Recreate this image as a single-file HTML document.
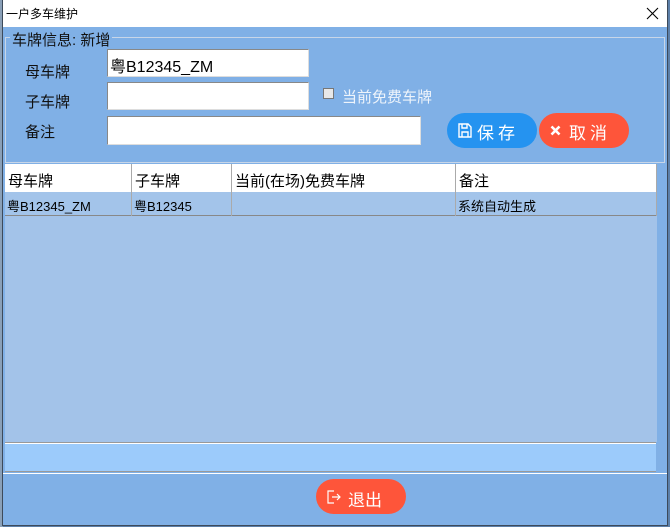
<!DOCTYPE html>
<html><head><meta charset="utf-8"><style>
body{margin:0;width:670px;height:527px;background:#5c7fa8;position:relative;overflow:hidden;font-family:"Liberation Sans","Noto Sans CJK SC",sans-serif;}
.a{position:absolute;box-sizing:border-box}
.t{position:absolute;white-space:nowrap}
</style></head><body>
<div class="a" style="left:0;top:0;width:3px;height:527px;background:#8aa0b8"></div>
<div class="a" style="left:2px;top:0;width:666px;height:526px;border:1px solid #3d4a5a;background:#80b0e6"></div>
<div class="a" style="left:3px;top:0;width:664px;height:27px;background:#fff"></div>
<div class="t" style="left:6px;top:5px;font-size:12px;color:#000">一户多车维护</div>
<svg class="a" style="left:646px;top:7px" width="13" height="13" viewBox="0 0 13 13"><path d="M1 1L12 12M12 1L1 12" stroke="#000" stroke-width="1.1"/></svg>
<div class="a" style="left:5px;top:37px;width:660px;height:126px;border:1px solid #c8d6e8"></div>
<div class="t" style="left:10px;top:29px;font-size:15px;background:#80b0e6;padding:0 2px;color:#111">车牌信息: 新增</div>
<div class="t" style="left:25px;top:61px;font-size:15px;color:#111">母车牌</div>
<div class="t" style="left:25px;top:91px;font-size:15px;color:#111">子车牌</div>
<div class="t" style="left:25px;top:121px;font-size:15px;color:#111">备注</div>
<div class="a" style="left:107px;top:49px;width:202px;height:28px;background:#fff;border:1px solid #888;border-right-color:#ddd;border-bottom-color:#ddd"></div>
<div class="t" style="left:110px;top:53px;font-size:16px;color:#000">粤B12345_ZM</div>
<div class="a" style="left:107px;top:82px;width:202px;height:28px;background:#fff;border:1px solid #888;border-right-color:#ddd;border-bottom-color:#ddd"></div>
<div class="a" style="left:107px;top:116px;width:314px;height:29px;background:#fff;border:1px solid #888;border-right-color:#ddd;border-bottom-color:#ddd"></div>
<div class="a" style="left:323px;top:88px;width:11px;height:11px;background:#e8e8e8;border:1px solid #777"></div>
<div class="t" style="left:342px;top:86px;font-size:15px;color:#eef4fb">当前免费车牌</div>
<div class="a" style="left:447px;top:113px;width:90px;height:35px;border-radius:18px;background:#2593f0"></div>
<svg class="a" style="left:458px;top:123px" width="14" height="15" viewBox="0 0 14 15"><path d="M1 1h9l3 3v10H1z M4 1v4h5V1 M4 14v-5h6v5" fill="none" stroke="#fff" stroke-width="1.4"/></svg>
<div class="t" style="left:477px;top:119px;font-size:17px;color:#fff;letter-spacing:4px">保存</div>
<div class="a" style="left:539px;top:113px;width:90px;height:35px;border-radius:18px;background:#fe553a"></div>
<svg class="a" style="left:550px;top:125px" width="11" height="11" viewBox="0 0 11 11"><path d="M1.5 1.5L9.5 9.5M9.5 1.5L1.5 9.5" stroke="#fff" stroke-width="2.6"/></svg>
<div class="t" style="left:569px;top:119px;font-size:17px;color:#fff;letter-spacing:4px">取消</div>
<div class="a" style="left:5px;top:164px;width:652px;height:278px;background:#a3c3e9"></div>
<div class="a" style="left:5px;top:164px;width:652px;height:28px;background:#fff"></div>
<div class="a" style="left:5px;top:192px;width:652px;height:24px;background:#a3c4ea;border-bottom:1px solid #888"></div>
<div class="a" style="left:131px;top:164px;width:1px;height:52px;background:#aaa"></div>
<div class="a" style="left:231px;top:164px;width:1px;height:52px;background:#aaa"></div>
<div class="a" style="left:455px;top:164px;width:1px;height:52px;background:#aaa"></div>
<div class="a" style="left:656px;top:164px;width:1px;height:52px;background:#aaa"></div>
<div class="t" style="left:8px;top:170px;font-size:15px;color:#000">母车牌</div>
<div class="t" style="left:135px;top:170px;font-size:15px;color:#000">子车牌</div>
<div class="t" style="left:235px;top:170px;font-size:15px;color:#000">当前(在场)免费车牌</div>
<div class="t" style="left:459px;top:170px;font-size:15px;color:#000">备注</div>
<div class="t" style="left:7px;top:196px;font-size:13px;color:#000">粤B12345_ZM</div>
<div class="t" style="left:134px;top:196px;font-size:13px;color:#000">粤B12345</div>
<div class="t" style="left:458px;top:196px;font-size:13px;color:#000">系统自动生成</div>
<div class="a" style="left:5px;top:442px;width:651px;height:30px;background:#9ccbfb;border-top:1px solid #999;border-bottom:1px solid #999"></div>
<div class="a" style="left:5px;top:443px;width:651px;height:1px;background:#fff"></div>
<div class="a" style="left:3px;top:473px;width:664px;height:1px;background:#fff"></div>
<div class="a" style="left:316px;top:479px;width:90px;height:35px;border-radius:18px;background:#fe553a"></div>
<svg class="a" style="left:327px;top:490px" width="14" height="14" viewBox="0 0 14 14"><path d="M7 1H1v12h6 M5 7h8 M10 4l3 3-3 3" fill="none" stroke="#fff" stroke-width="1.2"/></svg>
<div class="t" style="left:348px;top:486px;font-size:17px;color:#fff">退出</div>
</body></html>
